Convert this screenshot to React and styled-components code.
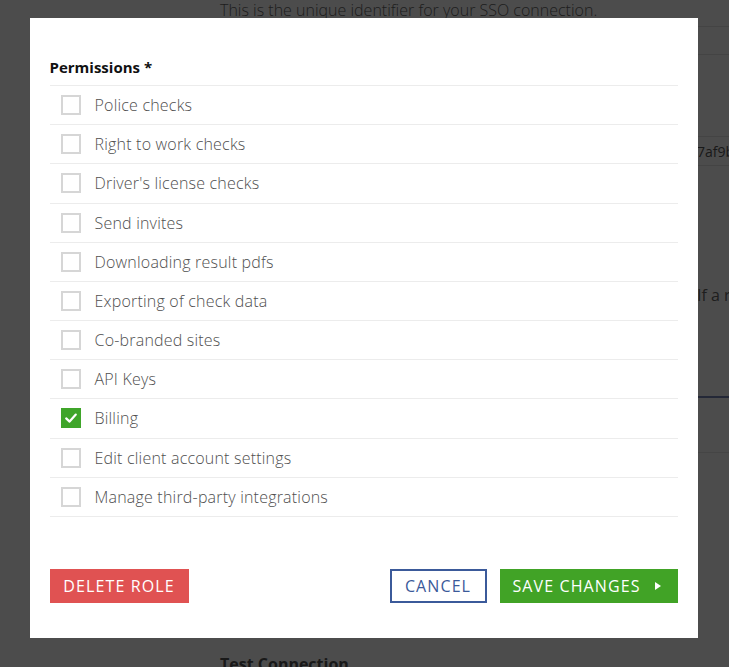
import React from 'react';
import styled, {createGlobalStyle} from 'styled-components';

const GlobalStyle = createGlobalStyle`
    html, body {
        margin: 0;
        padding: 0;
        height: 100%;
        overflow: hidden;
    }
    body {
        font-family: "Open Sans", "Liberation Sans", sans-serif;
        background: #fff;
    }
`;

const permissions = [
    {label: 'Police checks', checked: false},
    {label: 'Right to work checks', checked: false},
    {label: "Driver's license checks", checked: false},
    {label: 'Send invites', checked: false},
    {label: 'Downloading result pdfs', checked: false},
    {label: 'Exporting of check data', checked: false},
    {label: 'Co-branded sites', checked: false},
    {label: 'API Keys', checked: false},
    {label: 'Billing', checked: true},
    {label: 'Edit client account settings', checked: false},
    {label: 'Manage third-party integrations', checked: false},
];

function CheckIcon () {
    return (
        <svg width="14" height="14" viewBox="0 0 14 14">
            <path d="M2.2 7.4 L5.6 10.6 L11.8 3.6" fill="none" stroke="#fff" strokeWidth="2.2" strokeLinecap="round" strokeLinejoin="round"/>
        </svg>
    );
}

function Permission ({label, checked}) {
    return (
        <Row>
            <Box checked={checked}>
                {checked && <CheckIcon/>}
            </Box>
            <Label>{label}</Label>
        </Row>
    );
}

function App () {
    return (
        <>
            <GlobalStyle/>
            <Page>
                <Hint>This is the unique identifier for your SSO connection.</Hint>
                <Field/>
                <Field tall>
                    <FieldValue>7af9b</FieldValue>
                </Field>
                <Paragraph>If a role</Paragraph>
                <TabLine/>
                <Divider/>
                <SectionTitle>Test Connection</SectionTitle>
            </Page>

            <Overlay>
                <Modal>
                    <Heading>Permissions *</Heading>
                    <List>
                        {permissions.map(p => (
                            <Permission key={p.label} label={p.label} checked={p.checked}/>
                        ))}
                    </List>
                    <Footer>
                        <DeleteButton>Delete role</DeleteButton>
                        <Actions>
                            <CancelButton>Cancel</CancelButton>
                            <SaveButton>
                                Save changes
                                <Arrow/>
                            </SaveButton>
                        </Actions>
                    </Footer>
                </Modal>
            </Overlay>
        </>
    );
}

const Page = styled.div`
    padding-left: 220px;
    color: #5a5a5a;
`;
const Hint = styled.p`
    margin: 0;
    font-size: 16px;
    line-height: 20px;
    font-weight: 300;
    color: #666;
`;
const Field = styled.div`
    margin-top: ${p => p.tall ? '81px' : '6px'};
    height: ${p => p.tall ? '28px' : '27px'};
    border-top: 1px solid #e4e4e4;
    border-bottom: 1px solid #e4e4e4;
    display: flex;
    align-items: center;
    padding-left: 477px;
`;
const FieldValue = styled.span`
    font-size: 14px;
    color: #555;
`;
const Paragraph = styled.p`
    margin: 118px 0 0 477px;
    font-size: 16px;
    line-height: 22px;
    color: #666;
    white-space: nowrap;
`;
const TabLine = styled.div`
    margin-top: 90px;
    height: 2px;
    background: #7a86b8;
`;
const Divider = styled.div`
    margin-top: 54px;
    height: 1px;
    background: #e6e6e6;
`;
const SectionTitle = styled.h3`
    margin: 200px 0 0;
    font-size: 16px;
    font-weight: 700;
    color: #555;
`;
const Overlay = styled.div`
    position: fixed;
    inset: 0;
    background: rgba(0, 0, 0, 0.7);
    display: flex;
    justify-content: center;
    align-items: flex-start;
    padding-top: 18px;
    padding-right: 2px;
`;
const Modal = styled.div`
    width: 668px;
    height: 620px;
    box-sizing: border-box;
    background: #fff;
    padding: 38px 20px 35px;
    display: flex;
    flex-direction: column;
`;
const Heading = styled.h4`
    margin: 0 0 7px;
    font-size: 15px;
    line-height: 22px;
    font-weight: 700;
    color: #111;
`;
const List = styled.div`
    border-top: 1px solid #ececec;
`;
const Row = styled.label`
    display: flex;
    align-items: center;
    gap: 14px;
    height: 38.18px;
    padding-left: 11px;
    border-bottom: 1px solid #ececec;
`;
const Box = styled.span`
    width: 20px;
    height: 20px;
    box-sizing: border-box;
    border: ${p => p.checked ? 'none' : '2px solid #d6d6d6'};
    background: ${p => p.checked ? '#3fa52a' : '#fff'};
    display: flex;
    align-items: center;
    justify-content: center;
`;
const Label = styled.span`
    font-size: 16px;
    font-weight: 300;
    letter-spacing: 0.2px;
    color: #4f4f4f;
`;
const Footer = styled.div`
    margin-top: auto;
    display: flex;
    justify-content: space-between;
    align-items: center;
`;
const Actions = styled.div`
    display: flex;
    gap: 13px;
`;
const BaseButton = styled.button`
    height: 34px;
    box-sizing: border-box;
    border: none;
    padding: 0 13px;
    font-family: "Open Sans", "Liberation Sans", sans-serif;
    font-size: 16px;
    font-weight: 400;
    letter-spacing: 1.1px;
    text-transform: uppercase;
    display: flex;
    align-items: center;
    cursor: pointer;
`;
const DeleteButton = styled(BaseButton)`
    width: 139px;
    justify-content: center;
    background: #e05252;
    color: #fff;
`;
const CancelButton = styled(BaseButton)`
    width: 97px;
    justify-content: center;
    background: #fff;
    border: 2px solid #3b5a9a;
    color: #3b5a9a;
`;
const SaveButton = styled(BaseButton)`
    width: 178px;
    padding-left: 13px;
    background: #41a326;
    color: #fff;
    gap: 14px;
`;
const Arrow = styled.span`
    width: 0;
    height: 0;
    border-top: 4px solid transparent;
    border-bottom: 4px solid transparent;
    border-left: 6px solid #fff;
`;

export default App;
